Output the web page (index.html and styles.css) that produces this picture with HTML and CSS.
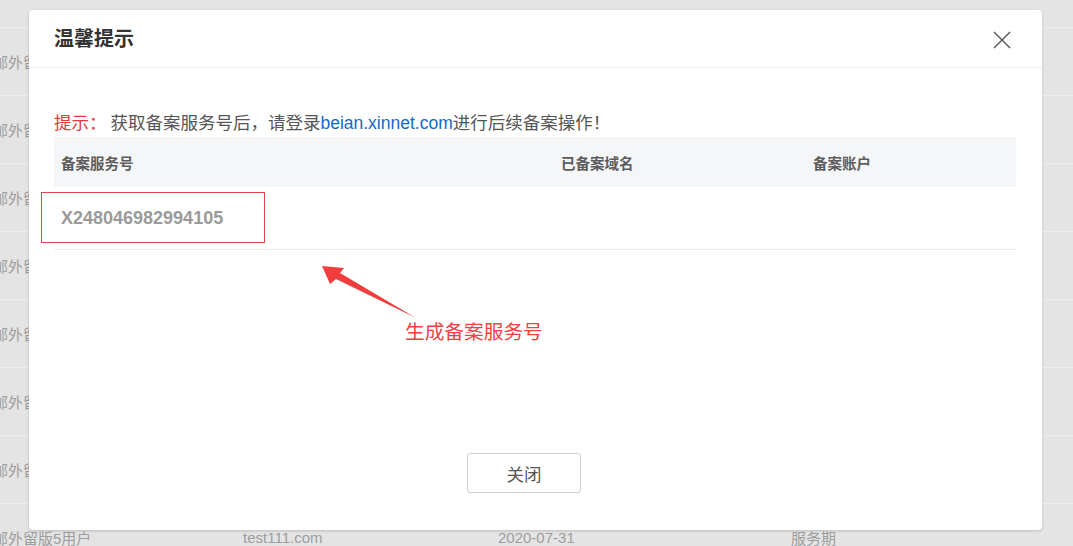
FILE: index.html
```html
<!DOCTYPE html>
<html lang="zh-CN">
<head>
<meta charset="utf-8">
<title>温馨提示</title>
<link rel="stylesheet" href="styles.css">
</head>
<body>
<div class="page">
  <div class="bg-table">
    <div class="bg-row"><span>邮外留版5用户</span><span>test111.com</span><span>2020-07-31</span><span>服务期</span></div>
    <div class="bg-row"><span>邮外留版5用户</span><span>test111.com</span><span>2020-07-31</span><span>服务期</span></div>
    <div class="bg-row"><span>邮外留版5用户</span><span>test111.com</span><span>2020-07-31</span><span>服务期</span></div>
    <div class="bg-row"><span>邮外留版5用户</span><span>test111.com</span><span>2020-07-31</span><span>服务期</span></div>
    <div class="bg-row"><span>邮外留版5用户</span><span>test111.com</span><span>2020-07-31</span><span>服务期</span></div>
    <div class="bg-row"><span>邮外留版5用户</span><span>test111.com</span><span>2020-07-31</span><span>服务期</span></div>
    <div class="bg-row"><span>邮外留版5用户</span><span>test111.com</span><span>2020-07-31</span><span>服务期</span></div>
    <div class="bg-row"><span>邮外留版5用户</span><span>test111.com</span><span>2020-07-31</span><span>服务期</span></div>
  </div>

  <div class="modal">
    <div class="modal-header">
      <h2 class="modal-title">温馨提示</h2>
      <span class="close">
        <svg width="18" height="18" viewBox="0 0 18 18"><path d="M1 1 L17 17 M17 1 L1 17" stroke="#555" stroke-width="1.4" fill="none"/></svg>
      </span>
    </div>
    <div class="modal-body">
      <p class="tip"><span class="tip-label">提示：</span> 获取备案服务号后，请登录<span class="link">beian.xinnet.com</span>进行后续备案操作！</p>
      <div class="table">
        <div class="thead">
          <div>备案服务号</div>
          <div>已备案域名</div>
          <div>备案账户</div>
        </div>
        <div class="trow">
          <div class="code">X248046982994105</div>
          <div></div>
          <div></div>
        </div>
      </div>
    </div>
    <div class="modal-footer">
      <button class="btn">关闭</button>
    </div>
  </div>

  <div class="mark-box"></div>
  <svg class="arrow" width="1073" height="546" viewBox="0 0 1073 546">
    <polygon points="322,266 330,284 336,279 416,318 340,273 344,268" fill="#f23d3d"/>
  </svg>
  <div class="mark-text">生成备案服务号</div>
</div>
</body>
</html>
```

FILE: styles.css
```css
* { box-sizing: border-box; }
html, body {
  margin: 0;
  padding: 0;
}
body {
  width: 1073px;
  height: 546px;
  overflow: hidden;
  background: #e4e4e4;
  font-family: "Noto Sans CJK SC", "Liberation Sans", sans-serif;
}
.page {
  position: relative;
  width: 1073px;
  height: 546px;
  overflow: hidden;
}
.bg-table {
  padding-top: 27px;
}
.bg-row {
  display: grid;
  grid-template-columns: 250px 255px 293px 1fr;
  align-items: center;
  height: 68px;
  margin-left: -7px;
  border-top: 1px solid #ececec;
  color: #9d9d9d;
  font-size: 15px;
  font-family: "Liberation Sans", "Noto Sans CJK SC", sans-serif;
}
.bg-row span { white-space: nowrap; }

.modal {
  position: absolute;
  left: 29px;
  top: 10px;
  width: 1013px;
  height: 520px;
  background: #fff;
  border-radius: 4px;
  box-shadow: 0 1px 3px rgba(0,0,0,0.18);
  display: flex;
  flex-direction: column;
}
.modal-header {
  height: 58px;
  border-bottom: 1px solid #f0f0f0;
  display: flex;
  align-items: center;
  justify-content: space-between;
  padding: 0 31px 0 25px;
}
.modal-title {
  margin: 0;
  font-size: 20px;
  font-weight: bold;
  color: #333;
  line-height: 1;
  padding-bottom: 1px;
}
.close {
  display: flex;
  width: 18px;
  height: 18px;
  margin-top: 2px;
}
.modal-body {
  padding: 0 26px 0 25px;
  flex: 1;
}
.tip {
  margin: 40px 0 0 0;
  font-size: 17.5px;
  line-height: 28px;
  color: #555;
  white-space: nowrap;
}
.tip-label { color: #e5393c; }
.link {
  color: #1767c4;
  font-family: "Liberation Sans", sans-serif;
}
.thead {
  display: grid;
  grid-template-columns: 500px 252px 1fr;
  height: 50px;
  align-items: center;
  background: #f5f6f8;
  padding-left: 7px;
  font-size: 14.5px;
  font-weight: bold;
  color: #5c5c5c;
}
.trow {
  display: grid;
  grid-template-columns: 500px 252px 1fr;
  height: 63px;
  align-items: center;
  padding-left: 7px;
  border-bottom: 1px solid #eeeeee;
}
.code {
  font-family: "Liberation Sans", sans-serif;
  font-weight: bold;
  font-size: 18px;
  color: #9a9a9a;
  padding-top: 1px;
}
.modal-footer {
  display: flex;
  justify-content: center;
  padding: 0 23px 37px 0;
}
.btn {
  width: 114px;
  height: 40px;
  background: #fff;
  border: 1px solid #cfcfcf;
  border-radius: 3px;
  font-family: "Noto Sans CJK SC", sans-serif;
  font-size: 17.5px;
  color: #555;
  padding: 0;
}

.mark-box {
  position: absolute;
  left: 41px;
  top: 192px;
  width: 224px;
  height: 51px;
  border: 1px solid #e0474c;
}
.arrow {
  position: absolute;
  left: 0;
  top: 0;
}
.mark-text {
  position: absolute;
  left: 405px;
  top: 317px;
  font-size: 19.7px;
  line-height: 28px;
  color: #ef3f3f;
  white-space: nowrap;
}
```
